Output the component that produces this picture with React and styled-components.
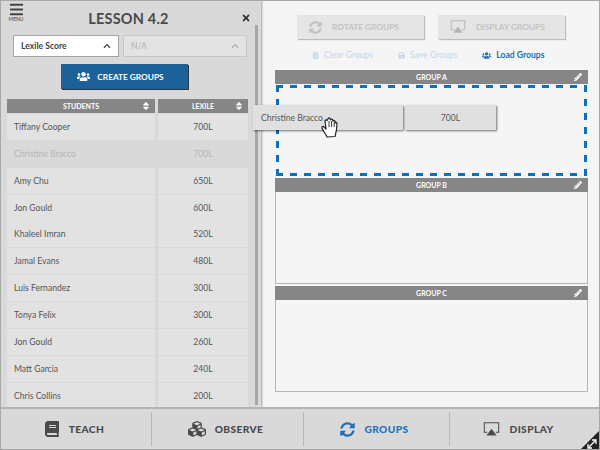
import React from 'react'
import styled, { createGlobalStyle } from 'styled-components'
import { FaBars, FaBook, FaChevronUp, FaCubes, FaPencilAlt, FaSave, FaSort, FaSyncAlt, FaTimes, FaTrashAlt, FaUsers } from 'react-icons/fa'

const students = [
    ['Tiffany Cooper', '700L'],
    ['Christine Bracco', '700L', true],
    ['Amy Chu', '650L'],
    ['Jon Gould', '600L'],
    ['Khaleel Imran', '520L'],
    ['Jamal Evans', '480L'],
    ['Luis Fernandez', '300L'],
    ['Tonya Felix', '300L'],
    ['Jon Gould', '260L'],
    ['Matt Garcia', '240L'],
    ['Chris Collins', '200L'],
]

const DisplayIcon = ({ size = 20, color = '#4a4a4a' }) => (
    <svg width={size} height={size * 0.85} viewBox='0 0 20 17'>
        <path d='M5 12H1.5V1h17v11H15' fill='none' stroke={color} strokeWidth='1.2' />
        <path d='M10 8l6 8H4z' fill={color} />
    </svg>
)

const HandIcon = () => (
    <svg width='20' height='24' viewBox='0 0 20 24'>
        <path
            d='M6 22c-1-3-4-6-5-9-.4-1.400 1.200-2 2-1l2 2-1-8c-.2-1.400 1.800-1.600 2-.3L7 4c0-1.400 2-1.400 2.200 0l.3 1c.2-1.200 2-1.200 2.200.1l.3 1c.3-1 1.900-.9 2 .4l.1 1.500c.4-1 1.900-.8 1.900.5 0 4-.6 8-2 13z'
            fill='#fff'
            stroke='#222'
            strokeWidth='1.200'
            strokeLinejoin='round'
        />
        <path d='M8 6v6M10.600 6v6M13.200 7v5' stroke='#222' strokeWidth='.9' fill='none' />
    </svg>
)

const App = () => {
    return <Frame>
        <GlobalStyle />
        <Main>
            <Sidebar>
                <TitleBar>
                    <MenuButton>
                        <FaBars size='15' />
                        <span>MENU</span>
                    </MenuButton>
                    <h1>LESSON 4.2</h1>
                    <CloseButton><FaTimes size='10' /></CloseButton>
                </TitleBar>
                <Selects>
                    <Select>Lexile Score <FaChevronUp size='8' /></Select>
                    <Select disabled>N/A <FaChevronUp size='8' /></Select>
                </Selects>
                <CreateButton><FaUsers size='13' /> CREATE GROUPS</CreateButton>
                <Table>
                    <HeadCell>STUDENTS <FaSort size='10' /></HeadCell>
                    <HeadCell>LEXILE <FaSort size='10' /></HeadCell>
                    {students.map(([name, score, dragging]) => (
                        <React.Fragment key={name + score}>
                            <NameCell $dragging={dragging}>{name}</NameCell>
                            <ScoreCell $dragging={dragging}>{score}</ScoreCell>
                        </React.Fragment>
                    ))}
                </Table>
                <Scrollbar />
            </Sidebar>
            <Content>
                <Actions>
                    <ActionButton><FaSyncAlt size='13' /> ROTATE GROUPS</ActionButton>
                    <ActionButton><DisplayIcon size={16} color='#b5b5b5' /> DISPLAY GROUPS</ActionButton>
                </Actions>
                <Links>
                    <LinkItem><FaTrashAlt size='7' /> Clear Groups</LinkItem>
                    <LinkItem><FaSave size='7' /> Save Groups</LinkItem>
                    <LinkItem $active><FaUsers size='9' /> Load Groups</LinkItem>
                </Links>
                <Group>
                    <GroupHead>GROUP A <FaPencilAlt size='8' /></GroupHead>
                    <DropZone />
                </Group>
                <Group>
                    <GroupHead>GROUP B <FaPencilAlt size='8' /></GroupHead>
                    <GroupBody />
                </Group>
                <Group>
                    <GroupHead>GROUP C <FaPencilAlt size='8' /></GroupHead>
                    <GroupBody />
                </Group>
            </Content>
        </Main>
        <BottomNav>
            <NavItem $width={151}><FaBook size='16' /> TEACH</NavItem>
            <NavItem $width={152}><FaCubes size='18' /> OBSERVE</NavItem>
            <NavItem $width={146} $active><FaSyncAlt size='15' /> GROUPS</NavItem>
            <NavItem $last><DisplayIcon size={17} /> DISPLAY</NavItem>
            <Corner>
                <svg width='20' height='20' viewBox='0 0 20 20'>
                    <path d='M20 0v20H0z' fill='#222' />
                    <path d='M9 17l6-6M12 10h4v4M8 14v4h4' stroke='#fff' strokeWidth='1.300' fill='none' />
                </svg>
            </Corner>
        </BottomNav>
        <DragRow>
            <DragName>Christine Bracco</DragName>
            <DragScore>700L</DragScore>
            <Hand><HandIcon /></Hand>
        </DragRow>
    </Frame>
}

const GlobalStyle = createGlobalStyle`
    body {
        margin: 0;
        font-family: 'Lato', 'Liberation Sans', sans-serif;
        background: #fff;
    }
`

const Frame = styled.div`
    position: relative;
    width: 600px;
    height: 450px;
    box-sizing: border-box;
    border: 1px solid #a8a8a8;
    overflow: hidden;
    display: flex;
    flex-direction: column;
    background: #f5f5f5;
`

const Main = styled.div`
    display: flex;
    height: 406px;
`

const Sidebar = styled.aside`
    position: relative;
    width: 260px;
    flex: none;
    box-sizing: border-box;
    padding: 0 11px 0 6px;
    background: #d9d9d9;
    box-shadow: 1px 0 2px rgba(0,0,0,.35);
    overflow: hidden;
`

const TitleBar = styled.div`
    position: relative;
    height: 33px;
    display: flex;
    justify-content: center;

    h1 {
        margin: 10px 0 0 0;
        font-size: 14.500px;
        line-height: 16px;
        font-weight: 700;
        letter-spacing: .2px;
        color: #4a4a4a;
    }
`

const MenuButton = styled.div`
    position: absolute;
    top: 1px;
    left: 1px;
    width: 16px;
    display: flex;
    flex-direction: column;
    align-items: center;
    color: #444;

    span {
        margin-top: -1px;
        font-size: 5px;
        line-height: 6px;
    }
`

const CloseButton = styled.div`
    position: absolute;
    top: 6px;
    right: -1px;
    color: #333;
`

const Selects = styled.div`
    display: flex;
    gap: 4px;
    margin: 1px 0 0 6px;
`

const Select = styled.div`
    width: 106px;
    height: 22px;
    box-sizing: border-box;
    display: flex;
    align-items: center;
    justify-content: space-between;
    padding: 0 7px;
    font-size: 8.600px;
    font-weight: 700;
    border: 1px solid #a5a5a5;
    color: #444;
    background: #fff;

    ${props => props.disabled && `
        width: 124px;
        font-weight: 400;
        border-color: #c8c8c8;
        color: #b0b0b0;
        background: #e3e3e3;
    `}
`

const CreateButton = styled.div`
    width: 127px;
    height: 25px;
    box-sizing: border-box;
    margin: 7px 0 0 54px;
    padding-right: 8px;
    display: flex;
    align-items: center;
    justify-content: center;
    gap: 7px;
    font-size: 8.300px;
    font-weight: 700;
    color: #fff;
    background: #1c6199;
    box-shadow: 1px 1px 0 #333;
`

const Table = styled.div`
    display: grid;
    grid-template-columns: 148px 90px;
    grid-auto-rows: 26.900px;
    column-gap: 3px;
    margin-top: 10px;
`

const HeadCell = styled.div`
    height: 14px;
    position: relative;
    display: flex;
    align-items: center;
    justify-content: center;
    font-size: 7px;
    font-weight: 700;
    color: #fff;
    background: #868686;

    svg {
        position: absolute;
        right: 4px;
    }
`

const NameCell = styled.div`
    display: flex;
    align-items: center;
    padding-left: 7px;
    margin-top: -12px;
    height: 26px;
    font-size: 8.600px;
    color: ${props => props.$dragging ? '#b5b5b5' : '#555'};
    background: ${props => props.$dragging ? '#d9d9d9' : '#e2e2e2'};
`

const ScoreCell = styled(NameCell)`
    justify-content: center;
    padding-left: 0;
`

const Scrollbar = styled.div`
    position: absolute;
    top: 24px;
    right: 3px;
    bottom: 2px;
    width: 3px;
    background: #a6a6a6;
`

const Content = styled.main`
    flex: 1;
    box-sizing: border-box;
    padding: 14px 11px 0 14px;
`

const Actions = styled.div`
    display: flex;
    gap: 14px;
    margin-left: 22px;
`

const ActionButton = styled.div`
    width: 127px;
    height: 24px;
    box-sizing: border-box;
    padding-left: 12px;
    display: flex;
    align-items: center;
    gap: 10px;
    font-size: 8.300px;
    font-weight: 700;
    color: #c2c2c2;
    background: #e5e5e5;
    box-shadow: 1px 1px 1px #bbb;
`

const Links = styled.div`
    display: flex;
    gap: 25px;
    margin: 10px 0 0 37px;
    height: 21px;
`

const LinkItem = styled.div`
    display: flex;
    align-items: center;
    gap: 5px;
    height: 12px;
    font-size: 8.600px;
    font-weight: ${props => props.$active ? 700 : 400};
    color: ${props => props.$active ? '#1c6fb5' : '#bcd6ea'};
`

const Group = styled.section`
    width: 313px;
    margin-bottom: 2px;
`

const GroupHead = styled.div`
    position: relative;
    height: 14px;
    display: flex;
    align-items: center;
    justify-content: center;
    font-size: 7px;
    font-weight: 700;
    color: #fff;
    background: #868686;

    svg {
        position: absolute;
        right: 6px;
    }
`

const GroupBody = styled.div`
    height: 92px;
    box-sizing: border-box;
    border: 1px solid #b5b5b5;
    border-top: none;
`

// css dashed borders can't do the 7 on / 7 off of the drop target
const DropZone = styled.div`
    height: 91px;
    margin: 1px 1px 0;
    box-sizing: border-box;
    background:
        repeating-linear-gradient(90deg, #0f70b7 0 7px, transparent 7px 14px) top / 100% 3px no-repeat,
        repeating-linear-gradient(90deg, #0f70b7 0 7px, transparent 7px 14px) bottom / 100% 3px no-repeat,
        repeating-linear-gradient(0deg, #0f70b7 0 7px, transparent 7px 14px) left / 3px 100% no-repeat,
        repeating-linear-gradient(0deg, #0f70b7 0 7px, transparent 7px 14px) right / 3px 100% no-repeat;
`

const BottomNav = styled.nav`
    position: relative;
    flex: 1;
    display: flex;
    align-items: center;
    border-top: 2px solid #b4b4b4;
    background: #d9d9d9;
`

const NavItem = styled.div`
    width: ${props => props.$width ? props.$width + 'px' : 'auto'};
    flex: ${props => props.$last ? 1 : 'none'};
    height: 34px;
    box-sizing: border-box;
    display: flex;
    align-items: center;
    justify-content: center;
    gap: 9px;
    padding-right: ${props => props.$last ? '12px' : '4px'};
    font-size: 10.200px;
    font-weight: 900;
    letter-spacing: .4px;
    color: ${props => props.$active ? '#1c73bb' : '#4a4a4a'};
    border-right: ${props => props.$last ? 'none' : '1px solid #b8b8b8'};
`

const Corner = styled.div`
    position: absolute;
    right: -1px;
    bottom: -1px;
    height: 20px;
`

const DragRow = styled.div`
    position: absolute;
    top: 104px;
    left: 252px;
    display: flex;
    gap: 2px;
`

const DragName = styled.div`
    width: 150px;
    height: 25px;
    box-sizing: border-box;
    padding-left: 8px;
    display: flex;
    align-items: center;
    font-size: 8.600px;
    color: #555;
    background: #e0e0e0;
    box-shadow: 1px 1px 2px rgba(0,0,0,.55);
`

const DragScore = styled(DragName)`
    width: 91px;
    padding-left: 0;
    justify-content: center;
`

const Hand = styled.div`
    position: absolute;
    left: 68px;
    top: 10px;
`

export default App
